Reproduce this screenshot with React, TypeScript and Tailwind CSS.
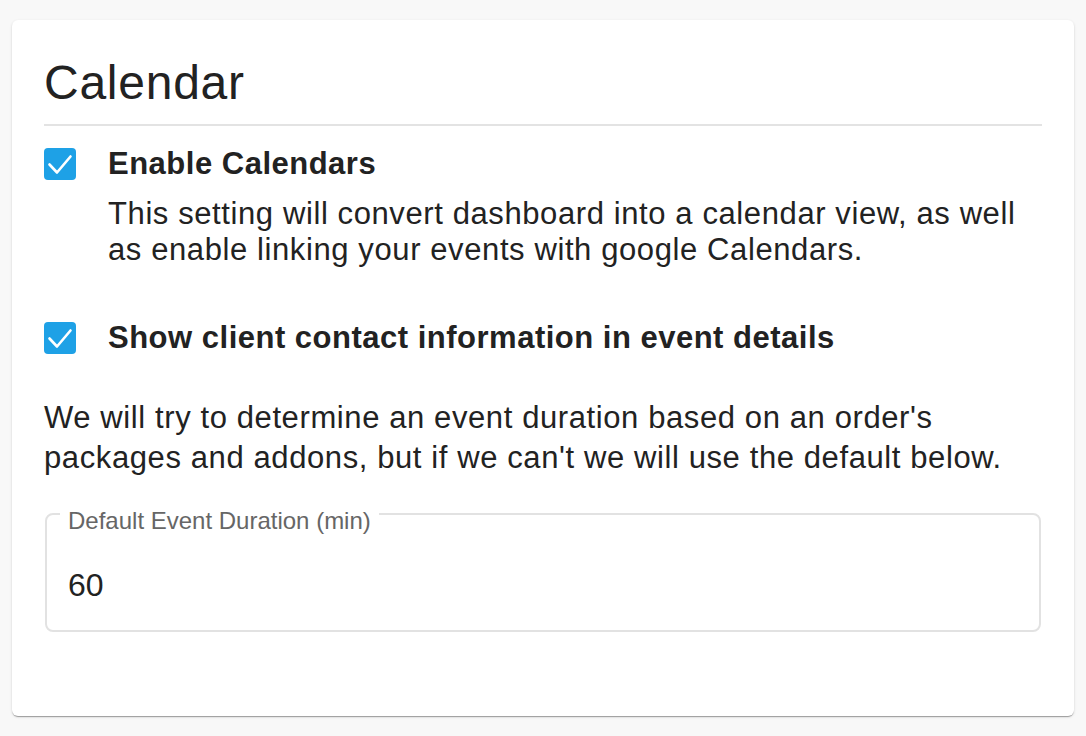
const Check = () => (
  <div className="w-8 h-8 shrink-0 rounded-[4px] bg-[#1ea1e6]">
    <svg viewBox="0 0 32 32" className="w-8 h-8">
      <path d="M5.5 16.5 L13 24.5 L26.5 8.5" fill="none" stroke="#fff" strokeWidth="2.6" strokeLinecap="round" strokeLinejoin="round" />
    </svg>
  </div>
);

const App = () => {
  return (
    <div className="min-h-screen bg-[#f8f8f8] px-3 pt-5 pb-5 font-['Liberation_Sans',Arial,sans-serif] text-[#222]">
      <section className="bg-white rounded-md shadow-[0_2px_1px_-1px_rgba(0,0,0,0.2),0_1px_1px_0_rgba(0,0,0,0.14),0_1px_3px_0_rgba(0,0,0,0.12)] px-8 pt-[35px] h-[696px]">
        {/* Header */}
        <h2 className="text-[48px] leading-[56px] tracking-[0.75px] pb-[13px] border-b-2 border-[#e3e3e3]">Calendar</h2>

        {/* Enable calendars */}
        <div className="flex gap-8 mt-[22px]">
          <Check />
          <div>
            <div className="text-[31px] leading-8 tracking-[0.5px] font-bold">Enable Calendars</div>
            <p className="text-[31px] leading-9 tracking-[0.6px] mt-4">
              This setting will convert dashboard into a calendar view, as well
              <br />
              as enable linking your events with google Calendars.
            </p>
          </div>
        </div>

        {/* Contact info */}
        <div className="flex gap-8 mt-[54px]">
          <Check />
          <div className="text-[31px] leading-8 tracking-[0.5px] font-bold">Show client contact information in event details</div>
        </div>

        <p className="text-[31px] leading-10 tracking-[0.6px] mt-[44px]">
          We will try to determine an event duration based on an order's
          <br />
          packages and addons, but if we can't we will use the default below.
        </p>

        {/* Duration field */}
        <div className="relative mt-[35px] mx-px h-[119px] border-2 border-[#e2e2e2] rounded-lg pt-[54px] pl-[21px]">
          <span className="absolute left-[13px] top-[-6px] bg-white px-2 text-[24px] leading-6 text-[#666]">
            Default Event Duration (min)
          </span>
          <div className="text-[32px] leading-8">60</div>
        </div>
      </section>
    </div>
  );
};

export default App;
